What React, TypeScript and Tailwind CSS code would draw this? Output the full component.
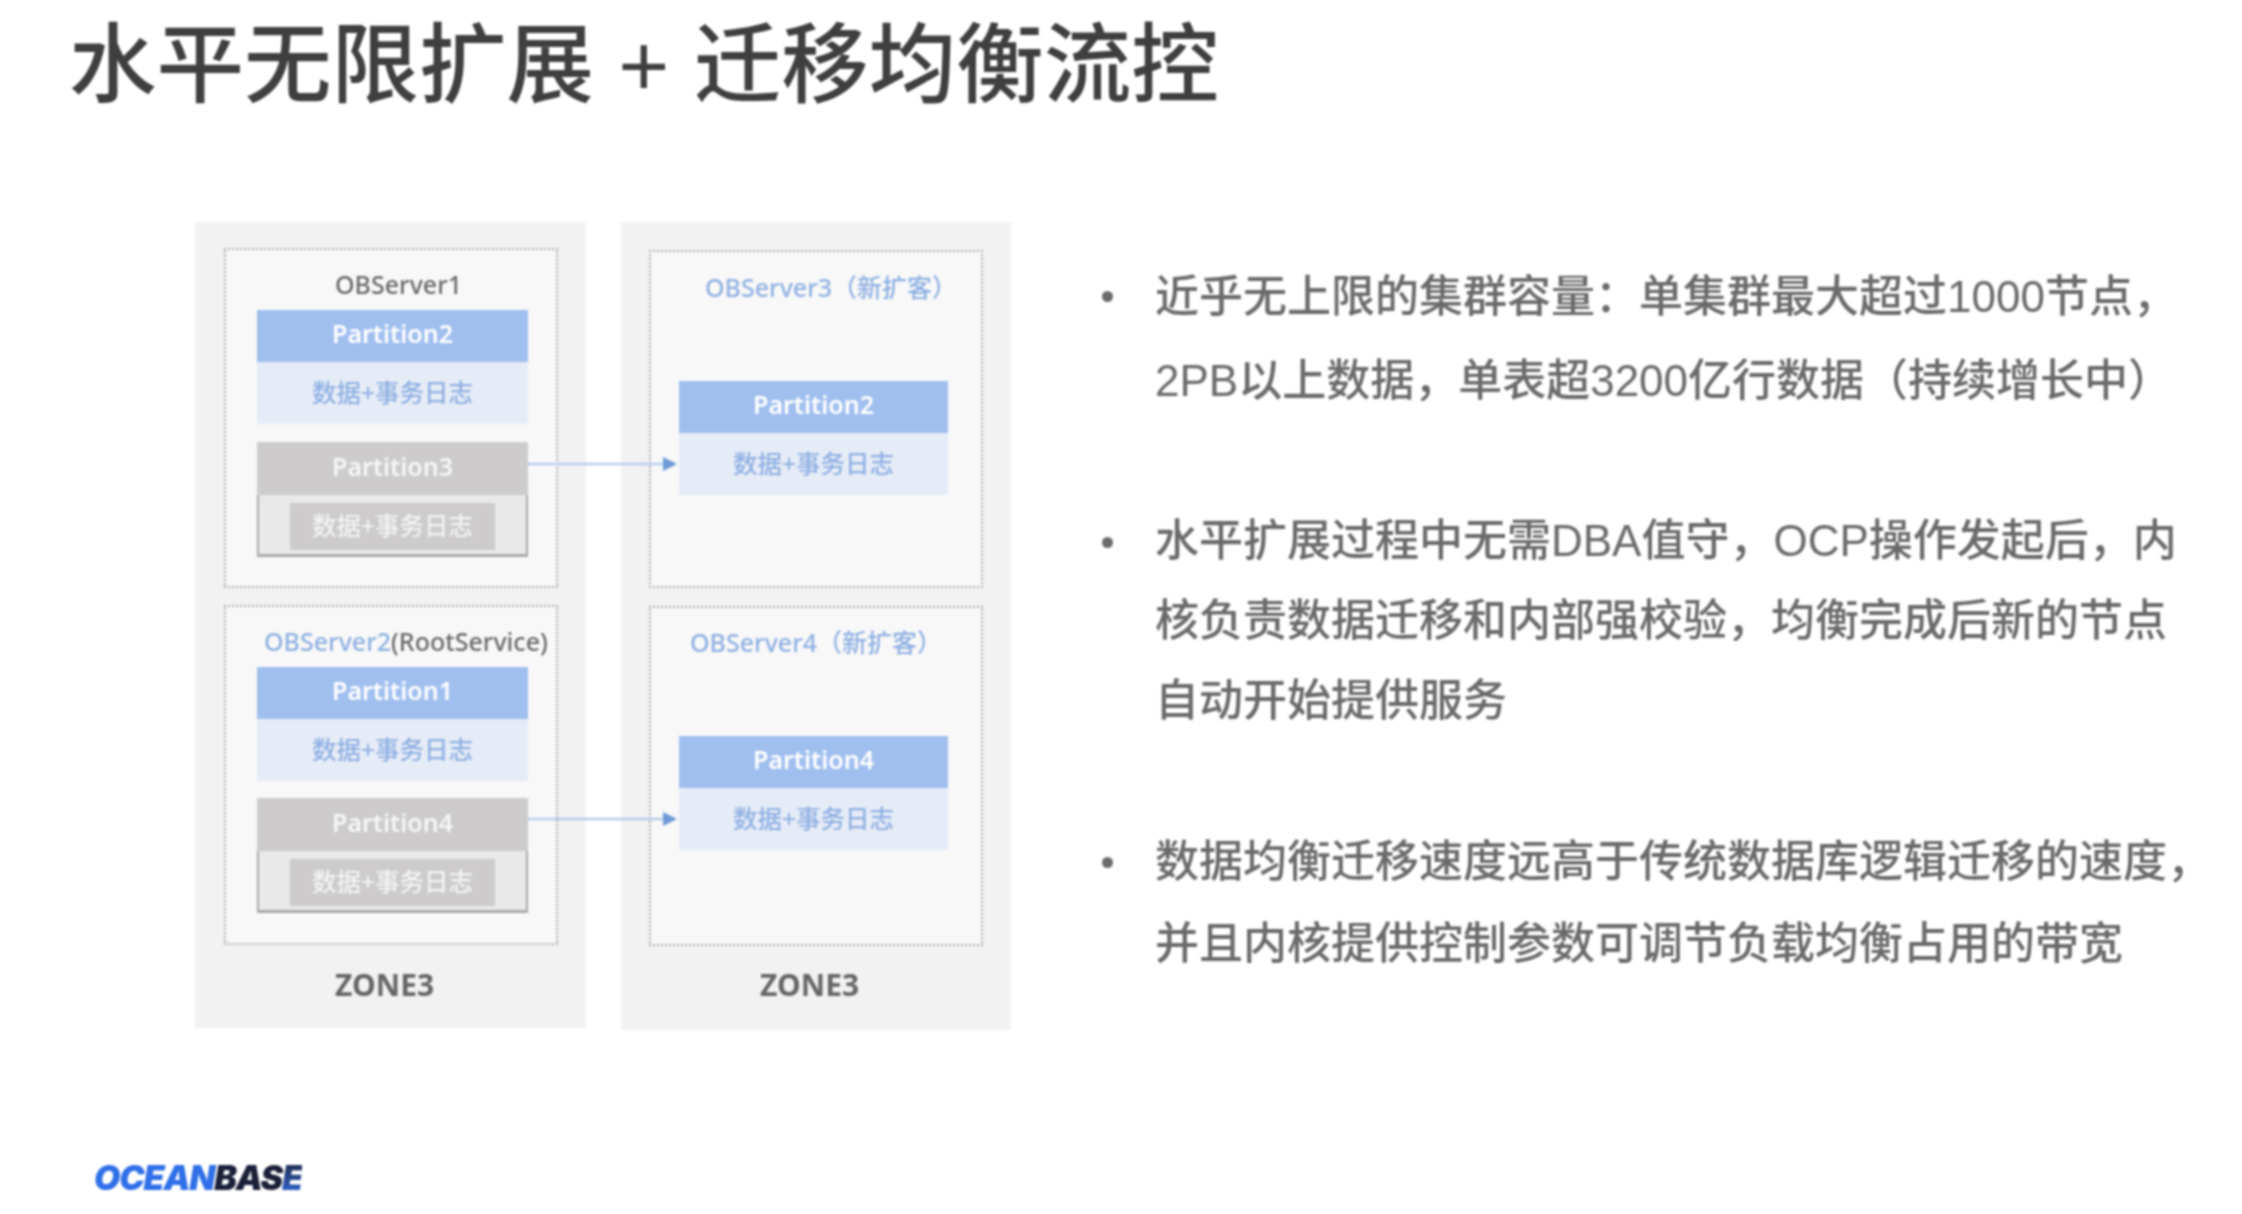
import type { ReactNode } from "react";

const cjkSans = "[font-family:'Noto_Sans','Noto_Sans_CJK_SC',sans-serif]";

function ActivePartition({ name, className }: { name: string; className: string }) {
  return (
    <div className={className}>
      <div className="flex h-[52px] items-center justify-center bg-[#a0bfef] pb-[4px] text-[25px] font-semibold text-white">
        {name}
      </div>
      <div className="flex h-[62px] items-center justify-center bg-[#e6ecf7] text-[24.5px] font-medium text-[#8fb0e2]">
        数据+事务日志
      </div>
    </div>
  );
}

function MovedPartition({ name, className }: { name: string; className: string }) {
  return (
    <div className={className}>
      <div className="flex h-[53px] items-center justify-center bg-[#cdcbcb] pb-[4px] text-[25px] font-semibold text-[#f7f7f7]">
        {name}
      </div>
      <div className="flex h-[62px] items-start justify-center border-x-2 border-b-[3px] border-[#a9a9a9] bg-[#e9e9e9] pt-2">
        <div className="flex h-[47px] w-[205px] items-center justify-center bg-[#cdcbcb] pb-[1px] text-[24.5px] font-medium text-[#f4f4f4]">
          数据+事务日志
        </div>
      </div>
    </div>
  );
}

function ServerBox({ title, titleClass, children, className }: { title: ReactNode; titleClass: string; children: ReactNode; className: string }) {
  return (
    <div className={`flex flex-col border-2 border-dotted border-[#a8a8a8] bg-[#f8f8f8] ${className}`}>
      <div className={`whitespace-nowrap text-[25px] font-medium leading-[34px] ${titleClass}`}>{title}</div>
      {children}
    </div>
  );
}

function MoveArrow({ className }: { className: string }) {
  return (
    <svg className={`absolute left-[333px] h-[16px] w-[150px] ${className}`} viewBox="0 0 150 16">
      <line x1="0" y1="8" x2="136" y2="8" stroke="#b7cdec" strokeWidth="2.5" />
      <polygon points="135,1 149,8 135,15" fill="#6f9bd8" />
    </svg>
  );
}

function ZoneLabel({ className }: { className: string }) {
  return <div className={`text-[30px] font-bold leading-[36px] text-[#666666] ${className}`}>ZONE3</div>;
}

function Bullet({ children, className }: { children: ReactNode; className: string }) {
  return (
    <li className={`relative whitespace-nowrap pl-[53px] ${className}`}>
      <span className="absolute left-0 top-[36px] size-[11px] rounded-full bg-[#6a6a6a]" />
      {children}
    </li>
  );
}

export default function App() {
  return (
    <div className={`flex h-[1214px] w-full flex-col overflow-hidden bg-white blur-[1px] ${cjkSans}`}>
      <h1 className="h-[126px] whitespace-pre pl-[69px] pt-[3px] text-[87.5px] font-medium leading-[126px] text-[#3f3f3f] [font-family:'Liberation_Sans','Noto_Sans_CJK_SC',sans-serif]">
        水平无限扩展 + 迁移均衡流控
      </h1>

      <div className="mt-[96px] flex items-start pl-[195px]">
        <div className="relative flex gap-[35px]">
          <div className="h-[806px] w-[391px] bg-[#f2f2f2] pl-[29px] pt-[26px]">
            <ServerBox className="h-[340px] w-[334px] pt-[17px]" title="OBServer1" titleClass="ml-[109px] text-[#6a6a6a]">
              <ActivePartition className="ml-[31px] mt-[9px] w-[271px]" name="Partition2" />
              <MovedPartition className="ml-[31px] mt-[18px] w-[271px]" name="Partition3" />
            </ServerBox>
            <ServerBox
              className="mt-[17px] h-[340px] w-[334px] pt-[17px]"
              title={
                <>
                  <span className="text-[#8fb0e2]">OBServer2</span>
                  <span className="text-[#6a6a6a]">(RootService)</span>
                </>
              }
              titleClass="ml-[38px]"
            >
              <ActivePartition className="ml-[31px] mt-[9px] w-[271px]" name="Partition1" />
              <MovedPartition className="ml-[31px] mt-[17px] w-[271px]" name="Partition4" />
            </ServerBox>
            <ZoneLabel className="mt-[22px] pl-[111px]" />
          </div>

          <div className="h-[808px] w-[390px] bg-[#f2f2f2] pl-[28px] pt-[28px]">
            <ServerBox className="h-[338px] w-[334px] pt-[18px]" title="OBServer3（新扩客）" titleClass="ml-[54px] text-[#8fb0e2]">
              <ActivePartition className="ml-[28px] mt-[77px] w-[269px]" name="Partition2" />
            </ServerBox>
            <ServerBox className="mt-[18px] h-[340px] w-[334px] pt-[17px]" title="OBServer4（新扩客）" titleClass="ml-[39px] text-[#8fb0e2]">
              <ActivePartition className="ml-[28px] mt-[77px] w-[269px]" name="Partition4" />
            </ServerBox>
            <ZoneLabel className="mt-[21px] pl-[111px]" />
          </div>

          <MoveArrow className="top-[234px]" />
          <MoveArrow className="top-[589px]" />
        </div>

        <ul className="ml-[91px] mt-[33px] text-[44px] font-medium text-[#6a6a6a] [font-family:'Liberation_Sans','Noto_Sans_CJK_SC',sans-serif]">
          <Bullet className="leading-[84px]">
            近乎无上限的集群容量：单集群最大超过1000节点，
            <br />
            2PB以上数据，单表超3200亿行数据（持续增长中）
          </Bullet>
          <Bullet className="mt-[78px] leading-[80px]">
            水平扩展过程中无需DBA值守，OCP操作发起后，内
            <br />
            核负责数据迁移和内部强校验，均衡完成后新的节点
            <br />
            自动开始提供服务
          </Bullet>
          <Bullet className="mt-[80px] leading-[82px]">
            数据均衡迁移速度远高于传统数据库逻辑迁移的速度，
            <br />
            并且内核提供控制参数可调节负载均衡占用的带宽
          </Bullet>
        </ul>
      </div>

      <div className="ml-[94px] mt-[126px] whitespace-nowrap text-[34px] font-black italic leading-[44px] tracking-[-1.2px] [font-family:'Inter',sans-serif]">
        <span className="text-[#2f6fe8]">OCEAN</span>
        <span className="text-[#1b2038]">BAS</span>
        <span className="bg-gradient-to-b from-[#1b2038] to-[#2f6fe8] bg-clip-text text-transparent">E</span>
      </div>
    </div>
  );
}
